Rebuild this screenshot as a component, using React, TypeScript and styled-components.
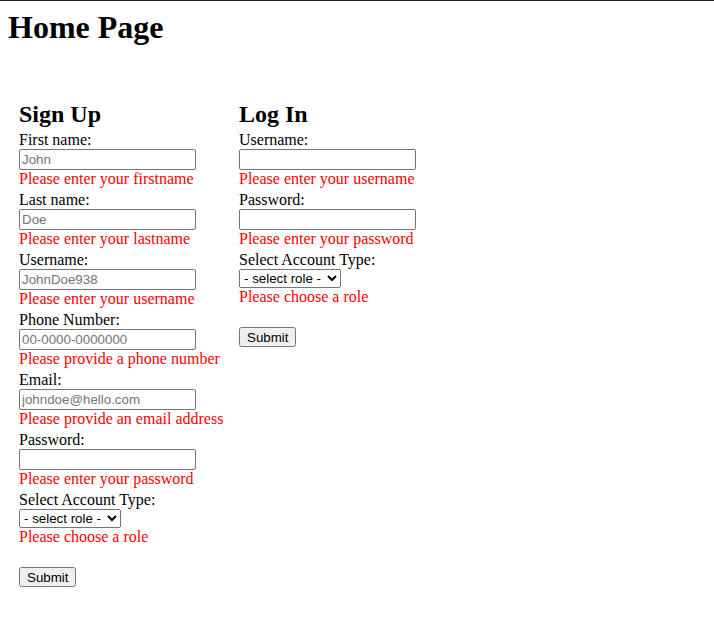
import styled, {createGlobalStyle} from 'styled-components';

const GlobalStyle = createGlobalStyle`
  html {
    border-top: 1px solid #222;
    background: #fff;
  }

  body {
    margin: 8px;
    font-family: "Liberation Serif", "Times New Roman", serif;
    font-size: 16px;
    color: #000;
  }
`;

const PageTitle = styled.h1`
  margin: 0;
  font-size: 32px;
  line-height: 37px;
  font-weight: bold;
`;

const Forms = styled.div`
  display: grid;
  grid-template-columns: 220px auto;
  padding: 54px 0 0 11px;
`;

const FormBox = styled.form`
  display: flex;
  flex-direction: column;
  align-items: flex-start;
`;

const FormTitle = styled.h2`
  margin: 0 0 3px;
  font-size: 24px;
  line-height: 28px;
  font-weight: bold;
`;

const Field = styled.div`
  display: flex;
  flex-direction: column;
  align-items: flex-start;
  margin-bottom: 3px;
`;

const Label = styled.label`
  display: block;
  line-height: 18px;
`;

const TextInput = styled.input`
  box-sizing: border-box;
  width: 177px;
  height: 21px;
  margin: 0;
  padding: 1px 2px;
  border: 1px solid #767676;
  border-radius: 2px;
  font-family: "Liberation Sans", Arial, sans-serif;
  font-size: 13.33px;
  color: #000;
  background: #fff;

  &::placeholder {
    color: #757575;
  }
`;

const RoleSelect = styled.select`
  box-sizing: border-box;
  width: 102px;
  height: 19px;
  margin: 0;
  font-family: "Liberation Sans", Arial, sans-serif;
  font-size: 13.33px;
  color: #000;
`;

const ErrorText = styled.span`
  display: block;
  color: #f00;
  line-height: 18px;
`;

const SubmitButton = styled.button<{$top: number}>`
  margin: ${p => p.$top}px 0 0;
  height: 20px;
  padding: 1px 6px;
  font-family: "Liberation Sans", Arial, sans-serif;
  font-size: 13.33px;
  color: #000;
`;

interface FieldDef {
    label: string;
    type: string;
    placeholder?: string;
    error: string;
}

const signUpFields: FieldDef[] = [
    {label: 'First name:', type: 'text', placeholder: 'John', error: 'Please enter your firstname'},
    {label: 'Last name:', type: 'text', placeholder: 'Doe', error: 'Please enter your lastname'},
    {label: 'Username:', type: 'text', placeholder: 'JohnDoe938', error: 'Please enter your username'},
    {label: 'Phone Number:', type: 'tel', placeholder: '00-0000-0000000', error: 'Please provide a phone number'},
    {label: 'Email:', type: 'email', placeholder: 'johndoe@hello.com', error: 'Please provide an email address'},
    {label: 'Password:', type: 'password', error: 'Please enter your password'},
];

const logInFields: FieldDef[] = [
    {label: 'Username:', type: 'text', error: 'Please enter your username'},
    {label: 'Password:', type: 'password', error: 'Please enter your password'},
];

const AccountForm = ({title, fields}: {title: string; fields: FieldDef[]}) => (
    <FormBox onSubmit={e => e.preventDefault()}>
        <FormTitle>{title}</FormTitle>
        {fields.map(f => (
            <Field key={f.label}>
                <Label>{f.label}</Label>
                <TextInput type={f.type} placeholder={f.placeholder}/>
                <ErrorText>{f.error}</ErrorText>
            </Field>
        ))}
        <Field>
            <Label>Select Account Type:</Label>
            <RoleSelect defaultValue="">
                <option value="">- select role -</option>
                <option value="buyer">Buyer</option>
                <option value="seller">Seller</option>
            </RoleSelect>
            <ErrorText>Please choose a role</ErrorText>
        </Field>
        <SubmitButton $top={18} type="submit">Submit</SubmitButton>
    </FormBox>
);

export default function App() {
    return (
        <>
            <GlobalStyle/>
            <PageTitle>Home Page</PageTitle>
            <Forms>
                <AccountForm title="Sign Up" fields={signUpFields}/>
                <AccountForm title="Log In" fields={logInFields}/>
            </Forms>
        </>
    );
}
